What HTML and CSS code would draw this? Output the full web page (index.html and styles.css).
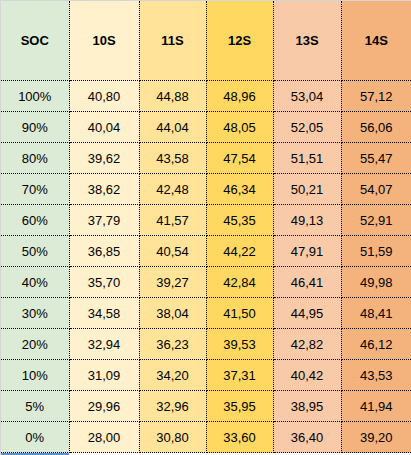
FILE: index.html
```html
<!DOCTYPE html>
<html lang="en">
<head>
  <meta charset="UTF-8">
  <title>SOC table</title>
  <link rel="stylesheet" href="styles.css">
</head>
<body>
  <div class="sheet">
    <table class="soc">
      <colgroup>
        <col class="w-soc"><col class="w-10"><col class="w-11"><col class="w-12"><col class="w-13"><col class="w-14">
      </colgroup>
      <thead>
        <tr>
          <th class="c0">SOC</th><th class="c1">10S</th><th class="c2">11S</th><th class="c3">12S</th><th class="c4">13S</th><th class="c5">14S</th>
        </tr>
      </thead>
      <tbody>
        <tr><td class="c0">100%</td><td class="c1">40,80</td><td class="c2">44,88</td><td class="c3">48,96</td><td class="c4">53,04</td><td class="c5">57,12</td></tr>
        <tr><td class="c0">90%</td><td class="c1">40,04</td><td class="c2">44,04</td><td class="c3">48,05</td><td class="c4">52,05</td><td class="c5">56,06</td></tr>
        <tr><td class="c0">80%</td><td class="c1">39,62</td><td class="c2">43,58</td><td class="c3">47,54</td><td class="c4">51,51</td><td class="c5">55,47</td></tr>
        <tr><td class="c0">70%</td><td class="c1">38,62</td><td class="c2">42,48</td><td class="c3">46,34</td><td class="c4">50,21</td><td class="c5">54,07</td></tr>
        <tr><td class="c0">60%</td><td class="c1">37,79</td><td class="c2">41,57</td><td class="c3">45,35</td><td class="c4">49,13</td><td class="c5">52,91</td></tr>
        <tr><td class="c0">50%</td><td class="c1">36,85</td><td class="c2">40,54</td><td class="c3">44,22</td><td class="c4">47,91</td><td class="c5">51,59</td></tr>
        <tr><td class="c0">40%</td><td class="c1">35,70</td><td class="c2">39,27</td><td class="c3">42,84</td><td class="c4">46,41</td><td class="c5">49,98</td></tr>
        <tr><td class="c0">30%</td><td class="c1">34,58</td><td class="c2">38,04</td><td class="c3">41,50</td><td class="c4">44,95</td><td class="c5">48,41</td></tr>
        <tr><td class="c0">20%</td><td class="c1">32,94</td><td class="c2">36,23</td><td class="c3">39,53</td><td class="c4">42,82</td><td class="c5">46,12</td></tr>
        <tr><td class="c0">10%</td><td class="c1">31,09</td><td class="c2">34,20</td><td class="c3">37,31</td><td class="c4">40,42</td><td class="c5">43,53</td></tr>
        <tr><td class="c0">5%</td><td class="c1">29,96</td><td class="c2">32,96</td><td class="c3">35,95</td><td class="c4">38,95</td><td class="c5">41,94</td></tr>
        <tr><td class="c0">0%</td><td class="c1">28,00</td><td class="c2">30,80</td><td class="c3">33,60</td><td class="c4">36,40</td><td class="c5">39,20</td></tr>
      </tbody>
    </table>
    <div class="selection"></div>
  </div>
</body>
</html>
```

FILE: styles.css
```css
body { margin: 0; background: #fff; font-family: "Liberation Sans", Arial, sans-serif; }
.sheet { width: 411px; border-top: 1px solid #d6d6d6; border-left: 1px solid #d6d6d6; box-sizing: border-box; }

.soc { border-collapse: collapse; table-layout: fixed; width: 410px; }
.w-soc { width: 68px; }
.w-10 { width: 70px; }
.w-11 { width: 67px; }
.w-12 { width: 67px; }
.w-13 { width: 68px; }
.w-14 { width: 70px; }

.soc th, .soc td {
  padding: 0; text-align: center; color: #000; font-size: 13px;
  border-right: 1px dotted #000; border-bottom: 1px dotted #000;
}
.soc th { height: 79px; font-weight: bold; }
.soc td { height: 30px; }
.soc tr > :last-child { border-right: none; }

.c0 { background: #dcebd5; }
.c1 { background: #fff1cb; }
.c2 { background: #ffe398; }
.c3 { background: #ffd862; }
.c4 { background: #f9caa8; }
.c5 { background: #f4b27d; }

.selection { width: 68px; height: 3px; background: #5b8fdc; }
```
